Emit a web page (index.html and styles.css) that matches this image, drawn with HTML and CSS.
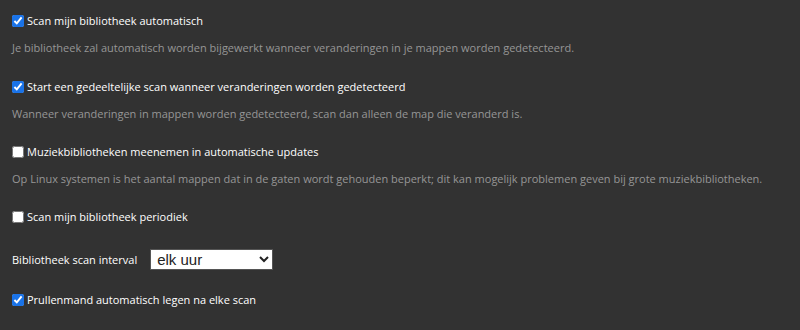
FILE: index.html
```html
<!DOCTYPE html>
<html lang="nl">
<head>
  <meta charset="UTF-8">
  <title>Bibliotheek instellingen</title>
  <link rel="stylesheet" href="styles.css">
</head>
<body>
  <div class="settings">
    <div class="setting">
      <label class="check"><input type="checkbox" checked> Scan mijn bibliotheek automatisch</label>
      <div class="desc">Je bibliotheek zal automatisch worden bijgewerkt wanneer veranderingen in je mappen worden gedetecteerd.</div>
    </div>
    <div class="setting">
      <label class="check"><input type="checkbox" checked> Start een gedeeltelijke scan wanneer veranderingen worden gedetecteerd</label>
      <div class="desc">Wanneer veranderingen in mappen worden gedetecteerd, scan dan alleen de map die veranderd is.</div>
    </div>
    <div class="setting">
      <label class="check"><input type="checkbox"> Muziekbibliotheken meenemen in automatische updates</label>
      <div class="desc">Op Linux systemen is het aantal mappen dat in de gaten wordt gehouden beperkt; dit kan mogelijk problemen geven bij grote muziekbibliotheken.</div>
    </div>
    <div class="setting">
      <label class="check"><input type="checkbox"> Scan mijn bibliotheek periodiek</label>
    </div>
    <div class="setting interval">
      <span class="interval-label">Bibliotheek scan interval</span>
      <select class="interval-select">
        <option>elk uur</option>
        <option>elke dag</option>
        <option>elke week</option>
      </select>
    </div>
    <div class="setting">
      <label class="check"><input type="checkbox" checked> Prullenmand automatisch legen na elke scan</label>
    </div>
  </div>
</body>
</html>
```
FILE: styles.css
```css
body { margin: 0; padding: 0; background: #323232; font-family: 'Open Sans', 'Noto Sans', sans-serif; font-size: 11px; color: #fff; }
.settings { padding: 12px 12px; }
.setting { margin-bottom: 20px; }
.setting:first-child { margin-bottom: 21px; }
.check { display: flex; align-items: center; line-height: 18px; font-weight: 500; }
.check input { width: 12px; height: 12px; margin: 0 3px 0 0; accent-color: #1a73e8; }
.desc { margin-top: 9px; line-height: 18px; color: #969696; white-space: nowrap; }
.interval { display: flex; align-items: center; height: 26px; margin-top: 19px; margin-bottom: 19px; }
.interval-label { margin-right: 13px; }
.interval-select { width: 123px; height: 21px; font-family: 'Liberation Sans', Arial, sans-serif; font-size: 15px; color: #222; background: #fff; border: 1px solid #555; border-radius: 0; padding: 0 2px; }
```
